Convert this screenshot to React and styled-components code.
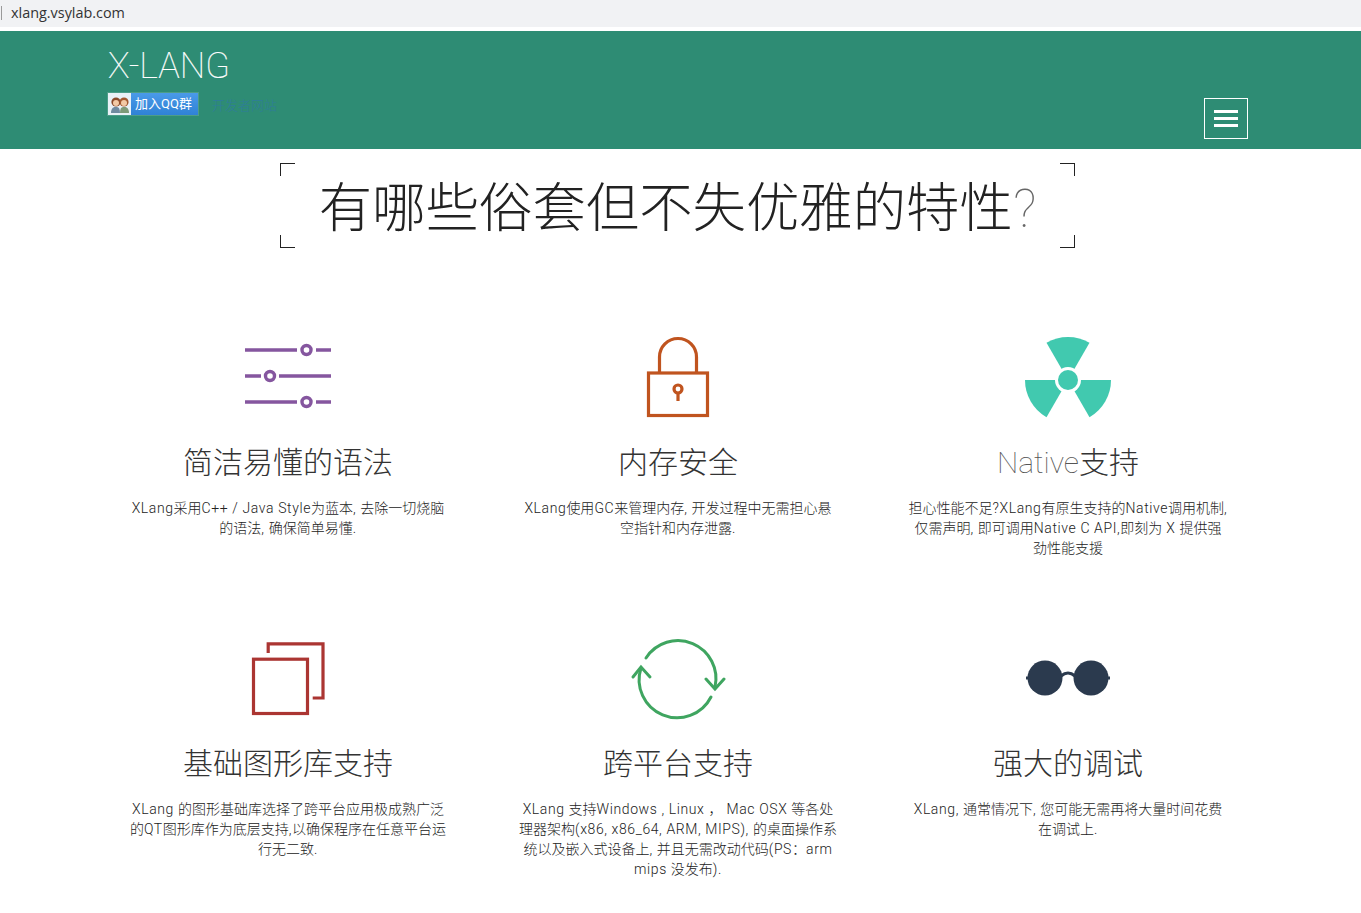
import React from "react";
import styled, { createGlobalStyle } from "styled-components";

const cjk = `Roboto, "Noto Sans CJK SC", sans-serif`;

const GlobalStyle = createGlobalStyle`
  html, body {
    margin: 0;
    padding: 0;
    background: #fff;
    color: #333;
    font-family: ${cjk};
  }
`;

const AddressBar = styled.div`
  height: 27px;
  background: #f1f2f4;
  display: flex;
  align-items: center;
  gap: 9px;
  padding: 0 0 2px 1px;
  box-sizing: border-box;
  font: 400 14.4px "Open Sans", sans-serif;
  color: #333;
  margin-bottom: 4px;
`;

const Caret = styled.span`
  width: 1px;
  height: 14px;
  background: #9a9a9a;
`;

const Page = styled.div`
  width: 1356px;
`;

const Header = styled.header`
  background: #2e8c74;
  height: 118px;
`;

const HeaderInner = styled.div`
  width: 1140px;
  height: 118px;
  margin: 0 auto;
  display: flex;
  justify-content: space-between;
`;

const Brand = styled.div`
  display: flex;
  flex-direction: column;
`;

const Logo = styled.div`
  font: 100 36px/40px Roboto, sans-serif;
  color: #fff;
  margin-top: 15px;
  -webkit-text-stroke: 0.2px #fff;
`;

const Links = styled.div`
  display: flex;
  align-items: center;
  gap: 14px;
  margin-top: 7px;
`;

const QQButton = styled.a`
  display: flex;
  width: 90px;
  height: 22px;
  background: linear-gradient(#4a9ae8, #2f82d6);
  box-shadow: 0 0 0 1px rgba(255, 255, 255, 0.15);
  color: #fff;
  font: 400 13px/22px ${cjk};
`;

const QQAvatar = styled.span`
  width: 23px;
  background: #e9f1f7;
  display: flex;
  align-items: center;
  justify-content: center;
  margin-right: 4px;
`;

const DevLink = styled.a`
  color: #2f7c9a;
  font: 300 13px ${cjk};
`;

const Toggle = styled.button`
  width: 44px;
  height: 41px;
  margin: 67px 0 0;
  padding: 0;
  background: transparent;
  border: 1px solid #fff;
  display: flex;
  flex-direction: column;
  align-items: center;
  justify-content: center;
  gap: 4px;
`;

const ToggleBar = styled.span`
  width: 24px;
  height: 3px;
  background: #fff;
`;

const HeadingBox = styled.div`
  position: relative;
  width: 795px;
  height: 85px;
  margin: 14px 0 0 280px;
  display: flex;
  align-items: center;
  justify-content: center;
`;

const Corner = styled.i`
  position: absolute;
  width: 14px;
  height: 12px;
  border: solid #222;
  border-width: ${(p) => (p.$top ? "1.5px" : "0")} ${(p) => (p.$left ? "0" : "1.5px")}
    ${(p) => (p.$top ? "0" : "1.5px")} ${(p) => (p.$left ? "1.5px" : "0")};
  ${(p) => (p.$top ? "top: 0;" : "bottom: 0;")}
  ${(p) => (p.$left ? "left: 0;" : "right: 0;")}
`;

const Heading = styled.h1`
  margin: 6px 0 0;
  font: 300 53.4px/85px ${cjk};
  color: #222;
  white-space: nowrap;
`;

const Thin = styled.span`
  font-weight: 100;
  color: ${(p) => p.$color || "#666"};
`;

const Latin = styled.span`
  letter-spacing: 0.6px;
`;

const Features = styled.section`
  width: 1170px;
  margin: 87px auto 0;
  display: grid;
  grid-template-columns: repeat(3, 390px);
  grid-auto-rows: 301px;
`;

const Feature = styled.article`
  display: flex;
  flex-direction: column;
  align-items: center;
  text-align: center;
`;

const IconSlot = styled.div`
  height: 88px;
  display: flex;
  justify-content: center;
`;

const Title = styled.h3`
  margin: 20px 0 0;
  font: 300 30px/40px ${cjk};
  color: #333;
`;

const Text = styled.p`
  width: 320px;
  margin: 15px 0 0;
  font: 300 14px/20px ${cjk};
  color: #222;
`;

const SlidersIcon = () => (
  <svg width="88" height="88" viewBox="-1 0 88 88" fill="none" stroke="#85569f" strokeWidth="3.4">
    <path d="M0 15H52M71 15H86M0 41H16M34 41H86M0 67H52M71 67H86" />
    <circle cx="61.5" cy="15" r="4.5" />
    <circle cx="25" cy="41" r="4.5" />
    <circle cx="61.5" cy="67" r="4.5" />
  </svg>
);

const LockIcon = () => (
  <svg width="64" height="88" viewBox="0 0 64 88" fill="none" stroke="#c0541f" strokeWidth="3.2">
    <rect x="2.5" y="38" width="59" height="42.5" />
    <path d="M13.5 38V22a18.5 18.5 0 0 1 37 0V38" />
    <circle cx="32" cy="54" r="4" />
    <path d="M32 58V66" />
  </svg>
);

const sector = (deg) => {
  const r = 43;
  const a = ((deg - 30) * Math.PI) / 180;
  const b = ((deg + 30) * Math.PI) / 180;
  const p = (v) => `${(44 + r * Math.cos(v)).toFixed(2)} ${(45 + r * Math.sin(v)).toFixed(2)}`;
  return `M44 45L${p(a)}A${r} ${r} 0 0 1 ${p(b)}Z`;
};

const RadiationIcon = () => (
  <svg width="88" height="88" viewBox="0 0 88 88">
    <g fill="#41c9af">
      <path d={sector(-90)} />
      <path d={sector(30)} />
      <path d={sector(150)} />
    </g>
    <circle cx="44" cy="45" r="13" fill="#fff" />
    <circle cx="44" cy="45" r="10" fill="#41c9af" />
  </svg>
);

const SquaresIcon = () => (
  <svg width="76" height="88" viewBox="0 -1 76 88" fill="none" stroke="#ab3532" strokeWidth="3.2">
    <rect x="3.5" y="22.2" width="54" height="54.3" />
    <path d="M18.2 16V6.8H73V61H62.7" />
  </svg>
);

const CycleIcon = () => (
  <svg width="96" height="88" viewBox="-1 -1 96 88" fill="none" stroke="#3fa560" strokeWidth="3" strokeLinecap="round">
    <path d="M15 21A38 38 0 0 1 84 50" />
    <path d="M75 42L84 52L93 42" />
    <path d="M80 60A38 38 0 0 1 10 31" />
    <path d="M2 40L10 30L19 40" />
  </svg>
);

const GlassesIcon = () => (
  <svg width="86" height="88" viewBox="0 -1 86 88" fill="none">
    <circle cx="20" cy="41" r="17.5" fill="#2b3a4e" />
    <circle cx="66" cy="41" r="17.5" fill="#2b3a4e" />
    <path d="M1 41H4M82 41H85M36 39Q43 33 50 39" stroke="#2b3a4e" strokeWidth="3" />
  </svg>
);

const AvatarIcon = () => (
  <svg width="20" height="20" viewBox="0 0 20 20">
    <path d="M1 19c0-4 2-6 4-6h2c2 0 3 2 3 6z" fill="#6f8aa0" />
    <path d="M10 19c0-4 1-6 3-6h2c2 0 4 2 4 6z" fill="#7d9a78" />
    <circle cx="6" cy="8" r="4.6" fill="#8a4a2a" />
    <circle cx="14" cy="8" r="4.6" fill="#a3582f" />
    <circle cx="6" cy="9" r="3" fill="#f3c9a5" />
    <circle cx="14" cy="9" r="3" fill="#f3c9a5" />
  </svg>
);

// latin runs sit wider in the reference than Roboto gives on its own
const spaced = (text) =>
  text.split(/([\x20-\x7e]+)/).map((part, i) => (i % 2 ? <Latin key={i}>{part}</Latin> : part));

const features = [
  {
    icon: <SlidersIcon />,
    title: "简洁易懂的语法",
    text: "XLang采用C++ / Java Style为蓝本, 去除一切烧脑的语法, 确保简单易懂.",
  },
  {
    icon: <LockIcon />,
    title: "内存安全",
    text: "XLang使用GC来管理内存, 开发过程中无需担心悬空指针和内存泄露.",
  },
  {
    icon: <RadiationIcon />,
    title: (
      <>
        <Thin $color="#555">Native</Thin>支持
      </>
    ),
    text: "担心性能不足?XLang有原生支持的Native调用机制, 仅需声明, 即可调用Native C API,即刻为 X 提供强劲性能支援",
  },
  {
    icon: <SquaresIcon />,
    title: "基础图形库支持",
    text: "XLang 的图形基础库选择了跨平台应用极成熟广泛的QT图形库作为底层支持,以确保程序在任意平台运行无二致.",
  },
  {
    icon: <CycleIcon />,
    title: "跨平台支持",
    text: "XLang 支持Windows , Linux ， Mac OSX 等各处理器架构(x86, x86_64, ARM, MIPS), 的桌面操作系统以及嵌入式设备上, 并且无需改动代码(PS：arm mips 没发布).",
  },
  {
    icon: <GlassesIcon />,
    title: "强大的调试",
    text: "XLang, 通常情况下, 您可能无需再将大量时间花费在调试上.",
  },
];

const App = () => (
  <>
    <GlobalStyle />
    <AddressBar>
      <Caret />
      xlang.vsylab.com
    </AddressBar>
    <Header>
      <Page>
        <HeaderInner>
          <Brand>
            <Logo>X-LANG</Logo>
            <Links>
              <QQButton>
                <QQAvatar>
                  <AvatarIcon />
                </QQAvatar>
                加入QQ群
              </QQButton>
              <DevLink>开发者网站</DevLink>
            </Links>
          </Brand>
          <Toggle aria-label="menu">
            <ToggleBar />
            <ToggleBar />
            <ToggleBar />
          </Toggle>
        </HeaderInner>
      </Page>
    </Header>
    <Page>
      <HeadingBox>
        <Corner $top $left />
        <Corner $top />
        <Corner $left />
        <Corner />
        <Heading>
          有哪些俗套但不失优雅的特性<Thin>?</Thin>
        </Heading>
      </HeadingBox>
      <Features>
        {features.map((f, i) => (
          <Feature key={i}>
            <IconSlot>{f.icon}</IconSlot>
            <Title>{f.title}</Title>
            <Text>{spaced(f.text)}</Text>
          </Feature>
        ))}
      </Features>
    </Page>
  </>
);

export default App;
